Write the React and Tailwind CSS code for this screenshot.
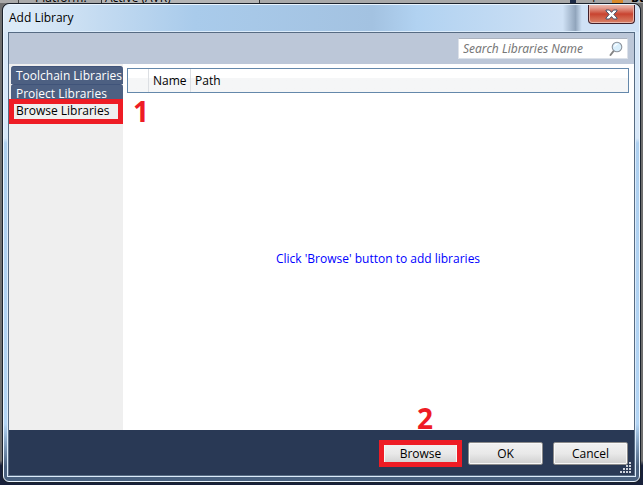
import React from "react";

const tabs = ["Toolchain Libraries", "Project Libraries"];

function Backdrop() {
  return (
    <div aria-hidden="true" className="flex h-[3px] shrink-0 items-end overflow-hidden bg-[#a9a9a9] text-[12px] leading-[10px] text-black">
      <div className="h-full w-[19px] border-r border-[#444]" />
      <div className="w-[82px] pl-[16px]">Platform:</div>
      <div className="w-[159px] border-x border-[#333] bg-[#b5b5b5] pl-[3px]">Active (AVR)</div>
      <div className="h-full flex-1" />
      <div className="h-full w-[6px] bg-[#1b2944]" />
      <div className="w-[36px] bg-[#a5a5a5] pl-[14px]">1</div>
      <div className="h-full w-[11px] bg-[#d98a2b]" />
      <div className="w-[20px] pl-[8px] font-bold">Bu</div>
    </div>
  );
}

function SearchIcon() {
  return (
    <svg width="14" height="16" viewBox="0 0 14 16" aria-hidden="true">
      <path d="M5 9.5 1.5 14" stroke="#858585" strokeWidth="2" strokeLinecap="round" />
      <circle cx="8" cy="6" r="4.8" fill="#d9effc" stroke="#8d939c" strokeWidth="1.1" />
      <path d="M5.5 5.5a2.8 2.8 0 0 1 3-2.2" stroke="#fff" strokeWidth="1.2" fill="none" />
    </svg>
  );
}

function ResizeGrip() {
  const dots = [[9, 0], [6, 3], [9, 3], [3, 6], [6, 6], [9, 6], [0, 9], [3, 9], [6, 9], [9, 9]];
  return (
    <svg width="11" height="11" className="absolute right-[3px] bottom-[2px]" aria-hidden="true">
      {dots.map(([x, y]) => (
        <rect key={x + "-" + y} x={x} y={y} width="2" height="2" fill="#ccd2dc" />
      ))}
    </svg>
  );
}

function DialogButton({ children }) {
  return (
    <button
      type="button"
      className="h-[23px] w-[75px] rounded-[2px] border border-[#8a8a8a] bg-linear-to-b from-[#f1f1f1] via-[#e9e9e9] via-50% to-[#cfcfcf] p-0 text-center leading-[20px] shadow-[inset_0_0_0_1px_#f8f8f8]"
    >
      {children}
    </button>
  );
}

export default function App() {
  return (
    <div className="flex h-screen flex-col overflow-hidden bg-linear-to-b from-[#6f6f6f] from-95% to-[#18213a] to-96% font-['Open_Sans','Noto_Sans',sans-serif] text-[12px] text-black">
      <Backdrop />
      <div className="mr-[2px] mb-[2px] ml-[2px] flex min-h-0 flex-1 rounded-[7px] border border-[#1b222c] bg-[#1b222c]">
        <section
          aria-label="Add Library"
          className="flex min-h-0 flex-1 flex-col rounded-[6px] border border-[#eaf5ff] bg-[linear-gradient(to_bottom,#d7e7f8_28%,#aed0f0_29%,#b3d5f5_88%,#49617f_97%)] px-[4px] pb-[5px]"
        >
          <header className="-mx-[4px] flex h-[27px] shrink-0 items-start rounded-t-[5px] bg-[linear-gradient(to_right,#dceaf7_3%,#c4dbf1_15%,#a9cbeb_30%,#a3c2e1_58%,#b1d2f1_65%,#cfe1f5_88%,#91a5bc_90%,#cfe1f5_91%)] pr-[4px] pl-[5px]">
            <h1 className="flex-1 leading-[26px]">Add Library</h1>
            <button
              type="button"
              aria-label="Close"
              className="flex h-[19px] w-[47px] items-center justify-center rounded-b-[4px] border border-t-0 border-[#41202a] bg-linear-to-b from-[#e6a99d] from-10% via-[#c84330] via-50% to-[#d98268] shadow-[inset_0_0_0_1px_#e9b5a9]"
            >
              <svg width="13" height="11" viewBox="0 0 13 11" aria-hidden="true">
                <path d="M1 1h3.4l2.1 2.4L8.6 1H12v1L8.8 5.4 12 9v1H8.6L6.5 7.6 4.4 10H1V9l3.2-3.6L1 2z" fill="#fff" stroke="#46536b" strokeWidth="1" />
              </svg>
            </button>
          </header>

          <div className="flex min-h-0 flex-1 flex-col border border-[#566b83] bg-white outline outline-[#dcecfb]">
            <div className="flex h-[31px] shrink-0 items-end justify-end bg-[#bcc7d8] pr-[6px] pb-[5px]">
              <label className="flex h-[21px] w-[170px] items-center border border-[#dce1e9] border-t-[#acb3bf] bg-white px-[4px]">
                <input
                  type="text"
                  aria-label="Search Libraries Name"
                  placeholder="Search Libraries Name"
                  className="h-[18px] min-w-0 flex-1 p-0 font-['Noto_Sans',sans-serif] italic outline-none placeholder:text-[#777]"
                />
                <SearchIcon />
              </label>
            </div>

            <div className="flex min-h-0 flex-1">
              <nav className="w-[114px] shrink-0 bg-[#efefef] pt-[2px]">
                {tabs.map((t) => (
                  <button
                    key={t}
                    type="button"
                    className="ml-[2px] block h-[18px] w-[112px] rounded-t-[3px] border-t border-[#40547a] bg-[#4d6082] p-0 pl-[5px] text-left leading-[16px] whitespace-nowrap text-white"
                  >
                    {t}
                  </button>
                ))}
                <div className="relative">
                  <button type="button" className="block h-[20px] w-full p-0 pb-[3px] pl-[7px] text-left leading-[16px] whitespace-nowrap">
                    Browse Libraries
                  </button>
                  <div className="pointer-events-none absolute -top-[3px] left-0 h-[25px] w-full border-[5px] border-[#ee1c25]" />
                  <span className="absolute -top-[5px] left-[124px] font-['Noto_Sans',sans-serif] text-[28px] leading-[28px] font-bold text-[#ee1c25]">1</span>
                </div>
              </nav>
              <main className="flex min-w-0 flex-1 flex-col pt-[4px] pr-[5px] pl-[4px]">
                <table className="w-full border-separate border-spacing-0 border border-[#6488ab]">
                  <thead>
                    <tr className="h-[23px] bg-linear-to-b from-white from-40% to-[#f5f6f7] to-40% text-left">
                      <th aria-label="Selected" className="w-[21px] border-r border-[#dcdfe3] p-0" />
                      <th className="w-[42px] border-r border-[#dcdfe3] p-0 pl-[4px] font-normal">Name</th>
                      <th className="p-0 pl-[4px] font-normal">Path</th>
                    </tr>
                  </thead>
                </table>
                <div className="flex flex-1 items-center justify-center pb-[6px] text-[#0000ff]">
                  Click 'Browse' button to add libraries
                </div>
              </main>
            </div>

            <footer className="relative flex h-[45px] shrink-0 items-center justify-end gap-[10px] bg-[#293955] pt-[2px] pr-[6px]">
              <div className="relative flex">
                <DialogButton>Browse</DialogButton>
                <div className="pointer-events-none absolute -inset-x-[4px] -inset-y-[2px] border-[5px] border-[#ee1c25]" />
                <span className="absolute -top-[38px] left-[34px] font-['Noto_Sans',sans-serif] text-[28px] leading-[28px] font-bold text-[#ee1c25]">2</span>
              </div>
              <DialogButton>OK</DialogButton>
              <DialogButton>Cancel</DialogButton>
              <ResizeGrip />
            </footer>
          </div>
        </section>
      </div>
    </div>
  );
}
